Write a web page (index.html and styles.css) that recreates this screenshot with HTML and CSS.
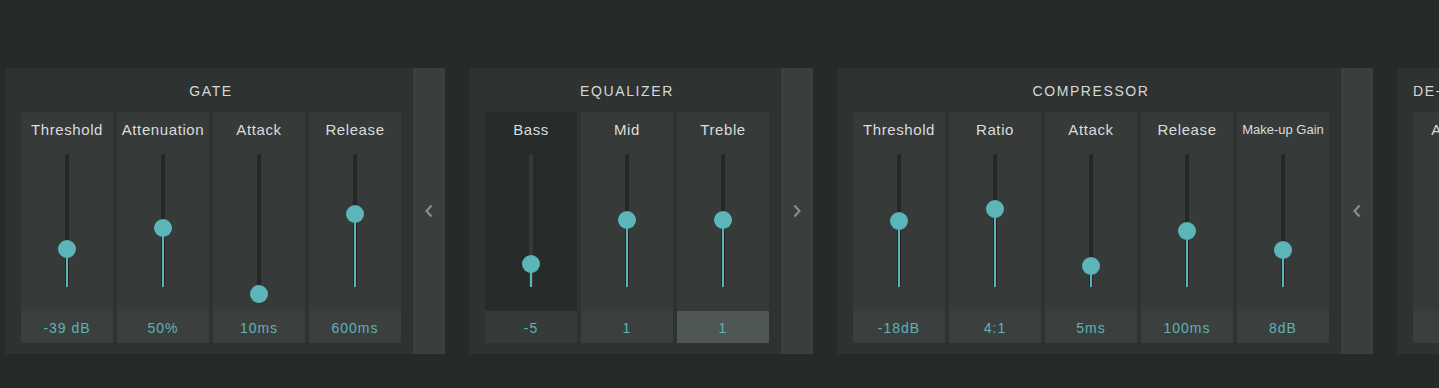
FILE: index.html
```html
<!DOCTYPE html>
<html lang="en">
<head>
<meta charset="utf-8">
<title>Effects rack</title>
<link rel="stylesheet" href="styles.css">
</head>
<body>
<div class="rack">
  <section class="module">
    <div class="panel">
      <div class="panel-title">GATE</div>
      <div class="controls">
        <div class="control">
          <div class="control-label">Threshold</div>
          <div class="slider"><div class="track"><div class="fill" style="height:38px"></div><div class="knob" style="top:95px"></div></div></div>
          <div class="control-value">-39 dB</div>
        </div>
        <div class="control">
          <div class="control-label">Attenuation</div>
          <div class="slider"><div class="track"><div class="fill" style="height:59px"></div><div class="knob" style="top:74px"></div></div></div>
          <div class="control-value">50%</div>
        </div>
        <div class="control">
          <div class="control-label">Attack</div>
          <div class="slider"><div class="track"><div class="fill" style="height:0px"></div><div class="knob" style="top:140px"></div></div></div>
          <div class="control-value">10ms</div>
        </div>
        <div class="control">
          <div class="control-label">Release</div>
          <div class="slider"><div class="track"><div class="fill" style="height:73px"></div><div class="knob" style="top:60px"></div></div></div>
          <div class="control-value">600ms</div>
        </div>
      </div>
    </div>
    <button class="collapse" type="button" aria-label="Collapse">
      <svg width="10" height="14" viewBox="0 0 10 14"><polyline points="7.5,1.5 2.5,7 7.5,12.5" fill="none" stroke="#8b918f" stroke-width="2"/></svg>
    </button>
  </section>

  <section class="module">
    <div class="panel">
      <div class="panel-title">EQUALIZER</div>
      <div class="controls">
        <div class="control control--active">
          <div class="control-label">Bass</div>
          <div class="slider"><div class="track"><div class="fill" style="height:23px"></div><div class="knob" style="top:110px"></div></div></div>
          <div class="control-value">-5</div>
        </div>
        <div class="control">
          <div class="control-label">Mid</div>
          <div class="slider"><div class="track"><div class="fill" style="height:67px"></div><div class="knob" style="top:66px"></div></div></div>
          <div class="control-value">1</div>
        </div>
        <div class="control control--hover">
          <div class="control-label">Treble</div>
          <div class="slider"><div class="track"><div class="fill" style="height:67px"></div><div class="knob" style="top:66px"></div></div></div>
          <div class="control-value">1</div>
        </div>
      </div>
    </div>
    <button class="collapse" type="button" aria-label="Expand">
      <svg width="10" height="14" viewBox="0 0 10 14"><polyline points="2.5,1.5 7.5,7 2.5,12.5" fill="none" stroke="#8b918f" stroke-width="2"/></svg>
    </button>
  </section>

  <section class="module">
    <div class="panel">
      <div class="panel-title">COMPRESSOR</div>
      <div class="controls">
        <div class="control">
          <div class="control-label">Threshold</div>
          <div class="slider"><div class="track"><div class="fill" style="height:66px"></div><div class="knob" style="top:67px"></div></div></div>
          <div class="control-value">-18dB</div>
        </div>
        <div class="control">
          <div class="control-label">Ratio</div>
          <div class="slider"><div class="track"><div class="fill" style="height:78px"></div><div class="knob" style="top:55px"></div></div></div>
          <div class="control-value">4:1</div>
        </div>
        <div class="control">
          <div class="control-label">Attack</div>
          <div class="slider"><div class="track"><div class="fill" style="height:21px"></div><div class="knob" style="top:112px"></div></div></div>
          <div class="control-value">5ms</div>
        </div>
        <div class="control">
          <div class="control-label">Release</div>
          <div class="slider"><div class="track"><div class="fill" style="height:56px"></div><div class="knob" style="top:77px"></div></div></div>
          <div class="control-value">100ms</div>
        </div>
        <div class="control">
          <div class="control-label control-label--small">Make-up Gain</div>
          <div class="slider"><div class="track"><div class="fill" style="height:37px"></div><div class="knob" style="top:96px"></div></div></div>
          <div class="control-value">8dB</div>
        </div>
      </div>
    </div>
    <button class="collapse" type="button" aria-label="Collapse">
      <svg width="10" height="14" viewBox="0 0 10 14"><polyline points="7.5,1.5 2.5,7 7.5,12.5" fill="none" stroke="#8b918f" stroke-width="2"/></svg>
    </button>
  </section>

  <section class="module module--partial">
    <div class="panel">
      <div class="panel-title">DE-ESSER</div>
      <div class="controls">
        <div class="control">
          <div class="control-label">Amount</div>
          <div class="slider"><div class="track"><div class="fill" style="height:60px"></div><div class="knob" style="top:73px"></div></div></div>
          <div class="control-value">50%</div>
        </div>
      </div>
    </div>
  </section>
</div>
</body>
</html>
```

FILE: styles.css
```css
* { box-sizing: border-box; }

html, body {
  margin: 0;
  padding: 0;
  height: 100%;
  background: #262a29;
  font-family: "Liberation Sans", Arial, sans-serif;
  overflow: hidden;
}

.rack {
  display: flex;
  align-items: flex-start;
  padding: 68px 0 0 5px;
  width: 100%;
  overflow: hidden;
}

.module {
  display: flex;
  flex: 0 0 auto;
  margin-right: 24px;
}

.module--partial {
  flex: 0 1 auto;
  min-width: 0;
  margin-right: 0;
}

.module--partial .panel {
  min-width: 0;
  flex: 0 1 auto;
}

.panel {
  background: #2e3231;
  padding: 0 12px 11px 16px;
  height: 286px;
  display: flex;
  flex-direction: column;
}

.panel-title {
  height: 44px;
  line-height: 46px;
  text-align: center;
  white-space: nowrap;
  color: #d6d9d8;
  font-size: 14px;
  letter-spacing: 1.6px;
}

.controls {
  display: flex;
  gap: 4px;
}

.control {
  flex: 0 0 92px;
  width: 92px;
  height: 231px;
  background: #363a39;
  display: flex;
  flex-direction: column;
}

.control-label {
  height: 36px;
  line-height: 36px;
  text-align: center;
  white-space: nowrap;
  color: #dadddc;
  font-size: 15px;
  letter-spacing: 0.6px;
}

.control-label--small {
  font-size: 13px;
  letter-spacing: 0;
}

.slider {
  height: 163px;
  padding-top: 6px;
}

.track {
  position: relative;
  width: 4px;
  height: 133px;
  margin: 0 auto;
  background: #232726;
  border-radius: 2px 2px 0 0;
}

.fill {
  position: absolute;
  left: 1px;
  bottom: 0;
  width: 2px;
  background: #5ab3b7;
}

.knob {
  position: absolute;
  left: 50%;
  width: 18px;
  height: 18px;
  margin: -9px 0 0 -9px;
  border-radius: 50%;
  background: #5bb5b9;
}

.control-value {
  height: 32px;
  line-height: 34px;
  text-align: center;
  background: #3b403e;
  color: #5eb2b6;
  font-size: 14px;
  letter-spacing: 1px;
}

.control--active {
  background: #272b2a;
}

.control--active .track {
  background: #353938;
}

.control--active .control-value {
  background: #363a39;
}

.control--hover .control-value {
  background: #4f5755;
}

.collapse {
  width: 32px;
  height: 286px;
  flex: 0 0 32px;
  border: 0;
  padding: 0;
  margin: 0;
  background: #3a3f3d;
  display: flex;
  align-items: center;
  justify-content: center;
  cursor: pointer;
}

.collapse svg {
  display: block;
}
```
